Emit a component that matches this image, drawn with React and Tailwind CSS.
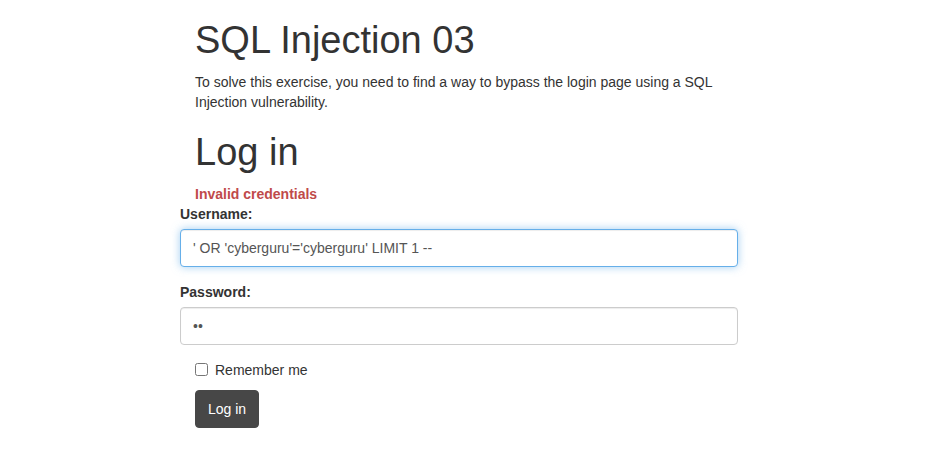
export default function App() {
  return (
    <div className="min-h-[456px] bg-white text-[#333] text-[14px] leading-[20px]" style={{ fontFamily: '"Liberation Sans", Arial, sans-serif' }}>
      <div className="ml-[180px] w-[558px] pt-[20px]">
        <div className="px-[15px]">
          <h1 className="text-[38px] leading-[1.1] font-normal mb-[10px]">SQL Injection 03</h1>
          <p className="w-[528px]">
            To solve this exercise, you need to find a way to bypass the login page using a SQL Injection vulnerability.
          </p>
          <h1 className="text-[38px] leading-[1.1] font-normal mt-[20px] mb-[10px]">Log in</h1>
          <p className="font-bold text-[#bf4a4a]">Invalid credentials</p>
        </div>

        <form onSubmit={(e) => e.preventDefault()}>
          <div className="mb-[15px]">
            <label className="block font-bold mb-[5px]">Username:</label>
            <input
              type="text"
              readOnly
              value="' OR 'cyberguru'='cyberguru' LIMIT 1 --"
              className="block w-full h-[38px] px-[12px] text-[14px] text-[#555] bg-white border border-[#66afe9] rounded-[4px] outline-none shadow-[inset_0_1px_1px_rgba(0,0,0,0.075),0_0_8px_rgba(102,175,233,0.6)]"
              style={{ fontFamily: '"Liberation Sans", Arial, sans-serif' }}
            />
          </div>
          <div className="mb-[15px]">
            <label className="block font-bold mb-[5px]">Password:</label>
            <input
              type="password"
              readOnly
              value="ab"
              className="block w-full h-[38px] px-[12px] text-[14px] text-[#555] bg-white border border-[#ccc] rounded-[4px] outline-none shadow-[inset_0_1px_1px_rgba(0,0,0,0.075)]"
              style={{ fontFamily: '"Liberation Sans", Arial, sans-serif' }}
            />
          </div>
          <div className="px-[15px]">
            <label className="flex items-center gap-[7px] h-[20px]">
              <input type="checkbox" className="w-[13px] h-[13px] m-0" />
              <span>Remember me</span>
            </label>
            <button
              type="submit"
              className="mt-[10px] h-[38px] px-[12px] bg-[#474747] text-white text-[14px] rounded-[4px] border border-[#474747]"
            >
              Log in
            </button>
          </div>
        </form>
      </div>
    </div>
  );
}
